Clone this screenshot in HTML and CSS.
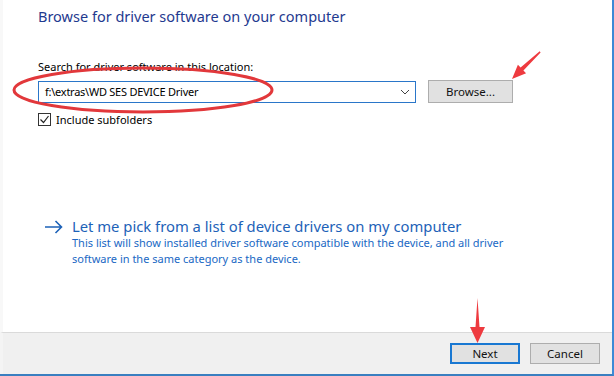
FILE: index.html
```html
<!DOCTYPE html>
<html lang="en">
<head>
    <meta charset="UTF-8">
    <title>Update Driver Software</title>
    <link rel="stylesheet" href="styles.css">
</head>
<body>
    <div class="dialog">
        <div class="content">
            <h1 class="title">Browse for driver software on your computer</h1>

            <label class="field-label">Search for driver software in this location:</label>
            <div class="search-row">
                <div class="path-box">
                    <span class="path-text">f:\extras\WD SES DEVICE Driver</span>
                    <svg class="chevron" width="10" height="6" viewBox="0 0 10 6">
                        <path d="M1 1 L5 5 L9 1" fill="none" stroke="#444" stroke-width="1"/>
                    </svg>
                </div>
                <button type="button" class="btn">Browse...</button>
            </div>

            <label class="check-row">
                <span class="checkbox">
                    <svg width="11" height="11" viewBox="0 0 11 11">
                        <path d="M1.5 5.5 L4.5 8.5 L9.5 2" fill="none" stroke="#222" stroke-width="1.2"/>
                    </svg>
                </span>
                Include subfolders
            </label>

            <div class="pick-link">
                <svg class="link-arrow" width="18" height="14" viewBox="0 0 18 14">
                    <path d="M0 7 H16.5 M10.5 1 L16.5 7 L10.5 13" fill="none" stroke="#1d62b8" stroke-width="1.6"/>
                </svg>
                <div>
                    <div class="link-title">Let me pick from a list of device drivers on my computer</div>
                    <div class="link-desc">This list will show installed driver software compatible with the device, and all driver software in the same category as the device.</div>
                </div>
            </div>
        </div>

        <div class="footer">
            <button type="button" class="btn btn-default">Next</button>
            <button type="button" class="btn">Cancel</button>
        </div>

        <!-- red annotation marks drawn over the dialog -->
        <svg class="marks" width="614" height="376" viewBox="0 0 614 376">
            <ellipse cx="143" cy="90" rx="129" ry="22" fill="none" stroke="#e2383b" stroke-width="3"/>
            <path d="M512 79 L517.9 64.7 L520.6 67.6 L539.7 51.3 L540.6 52.4 L523.4 70.4 L526.1 73.3 Z" fill="#ee3a3f"/>
            <path d="M477.5 298 L479.5 327 L485 327 L477.5 343 L470 327 L475.5 327 Z" fill="#ee3a3f"/>
        </svg>
    </div>
</body>
</html>
```

FILE: styles.css
```css
/* Page */
body {
    margin: 0;
    font-family: "Noto Sans", "Open Sans", sans-serif;
    color: #000;
}

.dialog {
    position: relative;
    width: 614px;
    height: 376px;
    display: flex;
    flex-direction: column;
    box-sizing: border-box;
    border-right: 2px solid #3c8ad6;
    border-bottom: 2px solid #3a7fc0;
    background-color: #fff;
}

/* Main area */
.content {
    flex: 1;
    padding: 6px 0 0 38px;
    background-color: #fff;
    border-left: 3px solid #f8f8f8;
    border-bottom: 1px solid #dadada;
}

.title {
    margin: 0 0 33px -3px;
    font-size: 14.5px;
    font-weight: normal;
    color: #1f3a8f;
}

.field-label {
    display: block;
    margin-left: -3px;
    font-size: 11px;
    margin-bottom: 6px;
}

.search-row {
    display: flex;
    align-items: center;
    gap: 12px;
    margin-left: -3px;
}

.path-box {
    width: 378px;
    height: 22px;
    box-sizing: border-box;
    border: 1px solid #2a76c9;
    display: flex;
    align-items: center;
    justify-content: space-between;
    padding: 0 6px 0 6px;
    font-size: 11px;
    letter-spacing: -0.25px;
}

.chevron {
    margin-right: -1px;
}

/* Buttons */
.btn {
    width: 85px;
    height: 23px;
    padding: 0;
    font-family: inherit;
    font-size: 11.5px;
    color: #111;
    background-color: #e1e1e1;
    border: 1px solid #adadad;
}

.check-row {
    display: flex;
    align-items: center;
    gap: 5px;
    margin: 9px 0 0 -3px;
    font-size: 11px;
}

.checkbox {
    width: 11px;
    height: 11px;
    border: 1px solid #333;
    display: flex;
}

/* Alternative link */
.pick-link {
    display: flex;
    gap: 9px;
    margin-top: 90px;
    margin-left: 4px;
    color: #1d62b8;
}

.link-arrow {
    margin-top: 3px;
}

.link-title {
    font-size: 14.8px;
    line-height: 18px;
}

.link-desc {
    font-size: 11px;
    line-height: 16px;
    color: #2068c4;
    width: 455px;
}

/* Bottom bar */
.footer {
    height: 41px;
    flex-shrink: 0;
    background-color: #f0f0f0;
    border-left: 3px solid #f4f4f4;
    display: flex;
    align-items: center;
    justify-content: flex-end;
    gap: 10px;
    padding-right: 12px;
}

.footer .btn {
    width: 70px;
    height: 21px;
}

.footer .btn-default {
    border: 2px solid #1978d2;
}

.marks {
    position: absolute;
    left: 0;
    top: 0;
    pointer-events: none;
}
```
